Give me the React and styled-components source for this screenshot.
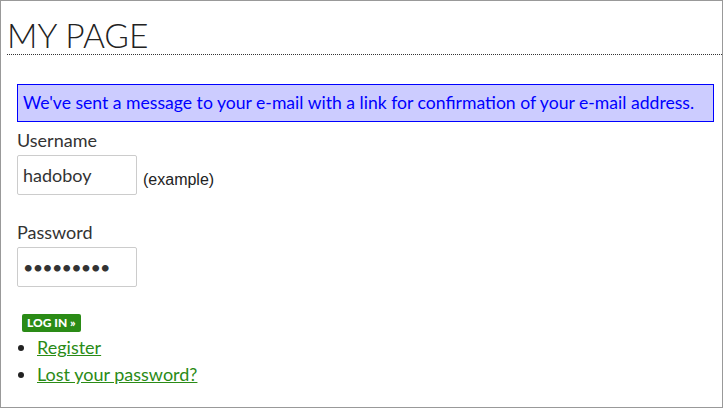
import React from "react";
import styled, { createGlobalStyle } from "styled-components";

const Global = createGlobalStyle`
  html, body {
    margin: 0;
    padding: 0;
    background: #fff;
  }
  body {
    font-family: Lato, "Liberation Sans", sans-serif;
    color: #333;
  }
`;

const Frame = styled.div`
  box-sizing: border-box;
  width: 723px;
  height: 408px;
  border: 1px solid #999;
  padding: 0 0 0 6px;
  overflow: hidden;
`;

const Title = styled.h1`
  margin: 0;
  padding: 15px 0 0 0;
  height: 38px;
  font-family: Lato, sans-serif;
  font-weight: 300;
  font-size: 33.5px;
  line-height: 38px;
  color: #222;
  border-bottom: 1px dotted #333;
`;

const Content = styled.div`
  padding: 29px 8px 0 10px;
`;

const Notice = styled.div`
  border: 1px solid #00f;
  background: #ccf;
  color: #00f;
  font-size: 17.6px;
  line-height: 20px;
  padding: 8px 6px 8px 5px;
`;

const Field = styled.div`
  margin-top: ${p => p.$top}px;
`;

const Label = styled.label`
  display: block;
  font-size: 18px;
  line-height: 20px;
  color: #333;
  margin-bottom: 5px;
`;

const Row = styled.div`
  display: flex;
  align-items: center;
  gap: 6px;
`;

const Input = styled.input`
  box-sizing: border-box;
  width: 120px;
  height: 40px;
  border: 1px solid #ccc;
  border-radius: 2px;
  padding: 0 5px;
  font-family: Lato, sans-serif;
  font-size: 18px;
  color: #333;
  outline: none;
  letter-spacing: ${p => (p.type === "password" ? "-0.8px" : "0")};
`;

const Hint = styled.span`
  font-family: "Liberation Sans", Arial, sans-serif;
  font-size: 16px;
  color: #222;
  margin-top: 9px;
`;

const Button = styled.button`
  display: block;
  margin: 27px 0 0 5px;
  padding: 0 5px;
  height: 18px;
  border: none;
  border-radius: 2px;
  background: #2a8b16;
  color: #fff;
  font-family: Lato, sans-serif;
  font-weight: 900;
  font-size: 12px;
  line-height: 18px;
  cursor: pointer;
`;

const Links = styled.ul`
  margin: 2px 0 0;
  padding-left: 20px;
  list-style: disc;
  font-size: 18px;
  line-height: 27px;
  color: #222;
`;

const Link = styled.a`
  color: #2a8b16;
  text-decoration: underline;
`;

export default function App() {
  return (
    <>
      <Global />
      <Frame>
        <Title>MY PAGE</Title>
        <Content>
          <Notice>
            We've sent a message to your e-mail with a link for confirmation of your e-mail address.
          </Notice>
          <Field $top={8}>
            <Label>Username</Label>
            <Row>
              <Input defaultValue="hadoboy" />
              <Hint>(example)</Hint>
            </Row>
          </Field>
          <Field $top={27}>
            <Label>Password</Label>
            <Row>
              <Input type="password" defaultValue="hadoboyxx" />
            </Row>
          </Field>
          <Button>LOG IN »</Button>
          <Links>
            <li><Link href="#">Register</Link></li>
            <li><Link href="#">Lost your password?</Link></li>
          </Links>
        </Content>
      </Frame>
    </>
  );
}
